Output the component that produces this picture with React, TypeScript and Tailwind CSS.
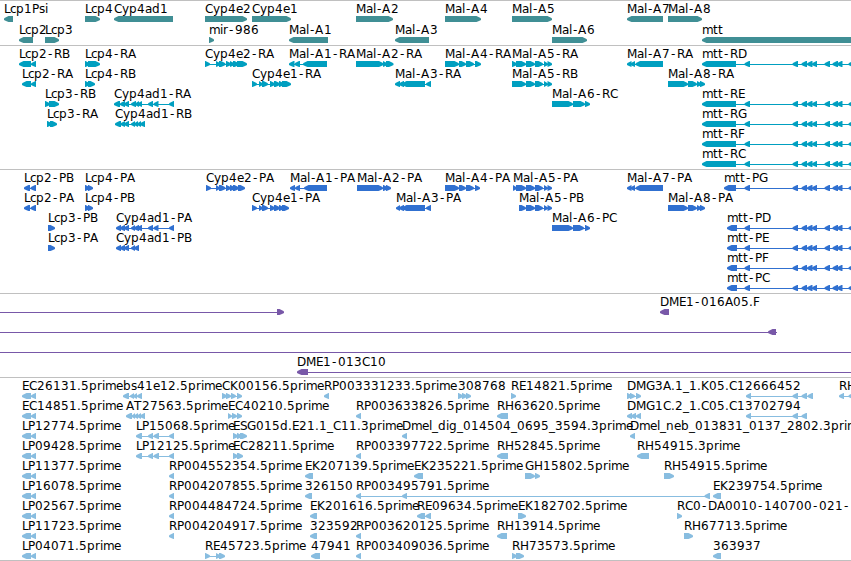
import React from 'react';

type Segment = [number, number];

interface Feature {
  row: number;
  dir: 'l' | 'r';
  segs: Segment[];
  label?: string;
  line?: Segment;
}

interface TrackProps {
  color: string;
  height: string;
  pitch?: number;
  features: Feature[];
}

// Advance widths of the label font, in whole pixels
const ADVANCES: Record<string, number> = {
  A: 8, B: 8, C: 8, D: 9, E: 7, F: 7, G: 9, H: 9, K: 8, L: 6, M: 10, P: 7, R: 8, S: 7, T: 8,
  a: 7, b: 8, c: 6, d: 8, e: 7, g: 8, i: 3, l: 3, m: 11, n: 8, p: 8, r: 5, s: 6, t: 5, y: 7,
  '-': 7, '.': 4, _: 6,
};

const glyphPositions = (text: string, start: number) => {
  let x = start;
  return text.split('').map((ch, i) => {
    let at = x;
    // hyphens sit in the middle of their wider slot
    if (ch === '-') at += 1;
    if (ch === 'A' && text[i - 1] === '-') at -= 1;
    x += ADVANCES[ch] ?? 8;
    return at;
  }).join(' ');
};

const f = (row: number, dir: 'l' | 'r', label: string, ...segs: Segment[]): Feature => ({ row, dir, label, segs });

const genes: Feature[] = [
  f(0, 'l', 'Lcp1Psi', [4, 13]),
  f(0, 'r', 'Lcp4', [85, 100]),
  f(0, 'l', 'Cyp4ad1', [114, 173]),
  f(0, 'r', 'Cyp4e2', [205, 247]),
  f(0, 'r', 'Cyp4e1', [252, 291]),
  f(0, 'r', 'Mal-A2', [356, 393]),
  f(0, 'r', 'Mal-A4', [445, 481]),
  f(0, 'r', 'Mal-A5', [512, 552]),
  f(0, 'l', 'Mal-A7', [627, 663]),
  f(0, 'r', 'Mal-A8', [668, 702]),
  f(1, 'l', 'Lcp2', [19, 33]),
  f(1, 'r', 'Lcp3', [45, 59]),
  f(1, 'r', 'mir-986', [209, 214]),
  f(1, 'l', 'Mal-A1', [289, 328]),
  f(1, 'l', 'Mal-A3', [395, 429]),
  f(1, 'r', 'Mal-A6', [552, 587]),
  f(1, 'l', 'mtt', [702, 860]),
];

const mttTail: Segment[] = [
  [744.5, 750], [792.5, 798], [801.5, 807], [807, 812.5], [812, 817],
  [824.5, 830], [832.5, 838], [837, 842.5], [848.5, 854],
];

const a5Tail: Segment[] = [[526, 535], [535, 543], [544, 548], [547.5, 552]];

const transcripts: Feature[] = [
  f(0, 'l', 'Lcp2-RB', [19, 31], [31, 36]),
  f(0, 'r', 'Lcp4-RA', [85, 90], [88, 100]),
  f(0, 'r', 'Cyp4e2-RA', [205, 210], [216, 220.5], [219, 225.5], [226, 231], [230, 234.5], [233, 239], [237, 247]),
  f(0, 'l', 'Mal-A1-RA', [289, 294.5], [294.5, 300], [303, 327]),
  f(0, 'r', 'Mal-A2-RA', [356, 383.5], [383, 387.5], [386, 393.5]),
  f(0, 'r', 'Mal-A4-RA', [445, 459], [459, 466], [466, 474], [475, 481]),
  f(0, 'r', 'Mal-A5-RA', [512, 517], [516, 526], ...a5Tail),
  f(0, 'l', 'Mal-A7-RA', [627, 631.5], [630.5, 635], [635.5, 663]),
  f(0, 'l', 'mtt-RD', [702, 736], ...mttTail),
  f(1, 'l', 'Lcp2-RA', [22, 31], [31, 36]),
  f(1, 'r', 'Lcp4-RB', [85, 90], [88, 95]),
  f(1, 'r', 'Cyp4e1-RA', [252, 257], [259, 263], [262, 268], [270, 275], [274, 280], [279, 284], [282, 291]),
  f(1, 'l', 'Mal-A3-RA', [395, 400], [399, 404], [402, 425], [426, 431]),
  f(1, 'r', 'Mal-A5-RB', [512, 526], ...a5Tail),
  f(1, 'r', 'Mal-A8-RA', [668, 688], [688, 697], [697, 701.5], [700, 705]),
  f(2, 'r', 'Lcp3-RB', [45, 50], [49, 59]),
  f(2, 'l', 'Cyp4ad1-RA', [114, 120], [120, 125], [124, 129], [131, 136], [135, 139], [137.5, 142], [148, 153], [153.5, 158.5], [169, 174]),
  f(2, 'r', 'Mal-A6-RC', [552, 573], [573, 585], [585, 590]),
  f(2, 'l', 'mtt-RE', [702, 736], ...mttTail),
  f(3, 'r', 'Lcp3-RA', [47, 52], [50, 57]),
  f(3, 'l', 'Cyp4ad1-RB', [115, 121], [120.5, 125], [124, 129], [131, 135], [134, 138], [137, 141], [140, 145]),
  f(3, 'l', 'mtt-RG', [702, 736], ...mttTail),
  f(4, 'l', 'mtt-RF', [702, 736], ...mttTail),
  f(5, 'l', 'mtt-RC', [702, 736], ...mttTail),
];

const proteins: Feature[] = [
  f(0, 'l', 'Lcp2-PB', [24, 30], [30.5, 36]),
  f(0, 'r', 'Lcp4-PA', [85, 90], [88, 93]),
  f(0, 'r', 'Cyp4e2-PA', [206, 211], [216, 220], [219, 225.5], [226, 231], [230, 235], [233, 239], [238, 245]),
  f(0, 'l', 'Mal-A1-PA', [290, 295], [295, 300], [304, 327]),
  f(0, 'r', 'Mal-A2-PA', [357, 383], [383, 388], [386, 391]),
  f(0, 'r', 'Mal-A4-PA', [445, 459], [459, 466], [466, 474], [475, 480]),
  f(0, 'r', 'Mal-A5-PA', [513, 517], [516, 526], ...a5Tail),
  f(0, 'l', 'Mal-A7-PA', [627, 631.5], [630.5, 635], [635.5, 663]),
  f(0, 'l', 'mtt-PG', [724, 736], ...mttTail),
  f(1, 'l', 'Lcp2-PA', [24, 30], [30.5, 36]),
  f(1, 'r', 'Lcp4-PB', [85, 90], [88, 93]),
  f(1, 'r', 'Cyp4e1-PA', [252, 257], [259, 263], [262, 268], [270, 275], [274, 280], [279, 284], [282, 289]),
  f(1, 'l', 'Mal-A3-PA', [396, 400], [399, 404], [402, 425], [426, 431]),
  f(1, 'r', 'Mal-A5-PB', [519, 526], ...a5Tail),
  f(1, 'r', 'Mal-A8-PA', [668, 688], [688, 697], [697, 701.5], [700, 705]),
  f(2, 'r', 'Lcp3-PB', [48, 55]),
  f(2, 'l', 'Cyp4ad1-PA', [116, 121], [120, 125], [124, 129], [131, 135], [134, 139], [137, 142], [148, 153], [153.5, 158.5], [169, 174]),
  f(2, 'r', 'Mal-A6-PC', [552, 573], [573, 584], [585, 590]),
  f(2, 'l', 'mtt-PD', [727, 737], ...mttTail),
  f(3, 'r', 'Lcp3-PA', [48, 55]),
  f(3, 'l', 'Cyp4ad1-PB', [116, 121], [120, 125], [124, 129], [131, 135], [134, 139]),
  f(3, 'l', 'mtt-PE', [727, 737], ...mttTail),
  f(4, 'l', 'mtt-PF', [727, 737], ...mttTail),
  f(5, 'l', 'mtt-PC', [727, 737], ...mttTail),
];

const clones: Feature[] = [
  { row: 0, dir: 'r', segs: [[277, 284]], line: [0, 278] },
  f(0, 'l', 'DME1-016A05.F', [660, 669]),
  { row: 1, dir: 'l', segs: [[768, 776]], line: [0, 777] },
  { row: 2, dir: 'l', segs: [], line: [0, 860] },
  { row: 3, dir: 'l', label: 'DME1-013C10', segs: [[297, 308]], line: [300, 860] },
];

const ests: Feature[] = [
  f(0, 'l', 'EC26131.5prime', [22, 31], [31, 36]),
  f(0, 'l', 'bs41e12.5prime', [123, 129], [130, 134], [133, 137], [137, 142]),
  f(0, 'r', 'CK00156.5prime', [222, 227], [226, 231], [231, 236], [237, 242]),
  f(0, 'l', 'RP003331233.5prime', [324, 329]),
  f(0, 'r', '308768', [458, 463], [462, 467], [466, 471]),
  f(0, 'r', 'RE14821.5prime', [511, 516]),
  f(0, 'r', 'DMG3A.1_1.K05.C12666452', [627, 632], [630, 635], [636, 641]),
  { row: 0, dir: 'l', segs: [[746, 751], [792.5, 798], [801.5, 807], [807.5, 813]] },
  f(0, 'l', 'RH', [839, 844], [848.5, 854]),
  f(1, 'l', 'EC14851.5prime', [22, 31], [31, 36]),
  f(1, 'l', 'AT27563.5prime', [126, 132], [131.5, 135], [134, 138], [137, 141], [140, 145]),
  f(1, 'r', 'EC40210.5prime', [228, 232], [232, 237], [237, 242]),
  f(1, 'l', 'RP003633826.5prime', [356, 361]),
  f(1, 'l', 'RH63620.5prime', [497, 508]),
  f(1, 'l', 'DMG1C.2_1.C05.C13702794', [627, 632], [631, 636], [636, 641]),
  { row: 1, dir: 'l', segs: [[746, 751], [792.5, 798], [801.5, 807]] },
  f(2, 'l', 'LP12774.5prime', [22, 31], [31, 36]),
  f(2, 'l', 'LP15068.5prime', [136, 142], [148, 153], [153.5, 159], [169, 174]),
  f(2, 'r', 'ESG015d.E21.1_C11.3prime', [233, 238], [237, 242], [240, 247]),
  f(2, 'l', 'Dmel_dig_014504_0695_3594.3prime', [402, 407]),
  f(2, 'l', 'Dmel_neb_013831_0137_2802.3prime', [630, 635]),
  f(3, 'l', 'LP09428.5prime', [22, 31], [31, 36]),
  f(3, 'l', 'LP12125.5prime', [136, 142], [148, 153], [153.5, 159], [169, 174]),
  f(3, 'r', 'EC28211.5prime', [233, 238], [237, 243]),
  f(3, 'l', 'RP003397722.5prime', [356, 361]),
  f(3, 'l', 'RH52845.5prime', [497, 508]),
  f(3, 'l', 'RH54915.3prime', [637, 649]),
  f(4, 'l', 'LP11377.5prime', [22, 31], [31, 36]),
  f(4, 'l', 'RP004552354.5prime', [169, 174]),
  f(4, 'l', 'EK207139.5prime', [305, 313]),
  f(4, 'l', 'EK235221.5prime', [414, 423]),
  f(4, 'r', 'GH15802.5prime', [525, 535], [535, 540]),
  f(4, 'r', 'RH54915.5prime', [664, 674]),
  f(5, 'l', 'LP16078.5prime', [22, 31], [31, 36]),
  f(5, 'l', 'RP004207855.5prime', [169, 174]),
  f(5, 'l', '326150', [305, 312]),
  f(5, 'l', 'RP003495791.5prime', [356, 361], [402, 407], [704.5, 710]),
  f(5, 'l', 'EK239754.5prime', [713, 721]),
  f(6, 'l', 'LP02567.5prime', [22, 31], [31, 36]),
  f(6, 'l', 'RP004484724.5prime', [169, 174]),
  f(6, 'l', 'EK201616.5prime', [310, 317]),
  f(6, 'l', 'RE09634.5prime', [417, 425], [425.5, 431]),
  f(6, 'r', 'EK182702.5prime', [518, 526]),
  f(6, 'r', 'RC0-DA0010-140700-021-', [677, 682]),
  f(7, 'l', 'LP11723.5prime', [22, 31], [31, 36]),
  f(7, 'l', 'RP004204917.5prime', [169, 174]),
  f(7, 'l', '323592', [310, 317]),
  f(7, 'l', 'RP003620125.5prime', [356, 361]),
  f(7, 'l', 'RH13914.5prime', [497, 507]),
  f(7, 'r', 'RH67713.5prime', [684, 693]),
  f(8, 'l', 'LP04071.5prime', [22, 31], [31, 36]),
  f(8, 'r', 'RE45723.5prime', [205, 210], [216, 220.5], [219, 225]),
  f(8, 'l', '47941', [311, 320]),
  f(8, 'l', 'RP003409036.5prime', [356, 361]),
  f(8, 'r', 'RH73573.5prime', [512, 517], [516, 524]),
  f(8, 'l', '363937', [713, 721]),
];

// Bar with a slightly rounded arrow head on the side it points to
const arrowPoints = ([a, b]: Segment, top: number, dir: 'l' | 'r') => {
  const s = dir === 'l' ? 1 : -1;
  const tip = dir === 'l' ? a : b;
  const tail = dir === 'l' ? b : a;
  const head = tip + s * Math.min(4.5, b - a);
  const neck = tip + s * 2;
  const bottom = top + 6;
  const mid = top + 3.2;
  return `${tip},${mid - 0.8} ${neck},${mid - 2} ${head},${top} ${tail},${top} ${tail},${bottom} ${head},${bottom} ${neck},${mid + 1.9} ${tip},${mid + 0.8}`;
};

const Track: React.FC<TrackProps> = ({ color, height, pitch = 20, features }) => (
  <section className={`w-full border-t border-[#c0c0c0] ${height}`}>
    <svg className={`block h-full w-full font-['DejaVu_Sans',sans-serif] text-[12px] ${color}`}>
      {features.map((feature, index) => {
        const top = feature.row * pitch + 15;
        const last = feature.segs[feature.segs.length - 1];
        const line = feature.line ?? (feature.segs.length > 1 ? [feature.segs[0][0] + 2, last[1] - 2] : null);
        return (
          <g key={index}>
            {line && (
              <rect x={line[0]} y={top + 3} width={line[1] - line[0]} height={1} fill="currentColor" shapeRendering="crispEdges" />
            )}
            {feature.segs.map((seg, i) => (
              <polygon key={i} points={arrowPoints(seg, top, feature.dir)} fill="currentColor" />
            ))}
            {feature.label && (
              <text x={glyphPositions(feature.label, feature.segs[0][0])} y={top - 3} fill="#000">
                {feature.label}
              </text>
            )}
          </g>
        );
      })}
    </svg>
  </section>
);

const App: React.FC = () => {
  return (
    <main className="flex h-[561px] w-[851px] flex-col overflow-hidden bg-white">
      <Track color="text-[#408f95]" height="h-[45px]" pitch={21} features={genes} />
      <Track color="text-[#009fc0]" height="h-[124px]" features={transcripts} />
      <Track color="text-[#3070d0]" height="h-[124px]" features={proteins} />
      <Track color="text-[#7858a8]" height="h-[84px]" features={clones} />
      <Track color="text-[#88bde0]" height="h-[183px]" features={ests} />
      <div className="w-full border-t border-[#c0c0c0]"></div>
    </main>
  );
};

export default App;
